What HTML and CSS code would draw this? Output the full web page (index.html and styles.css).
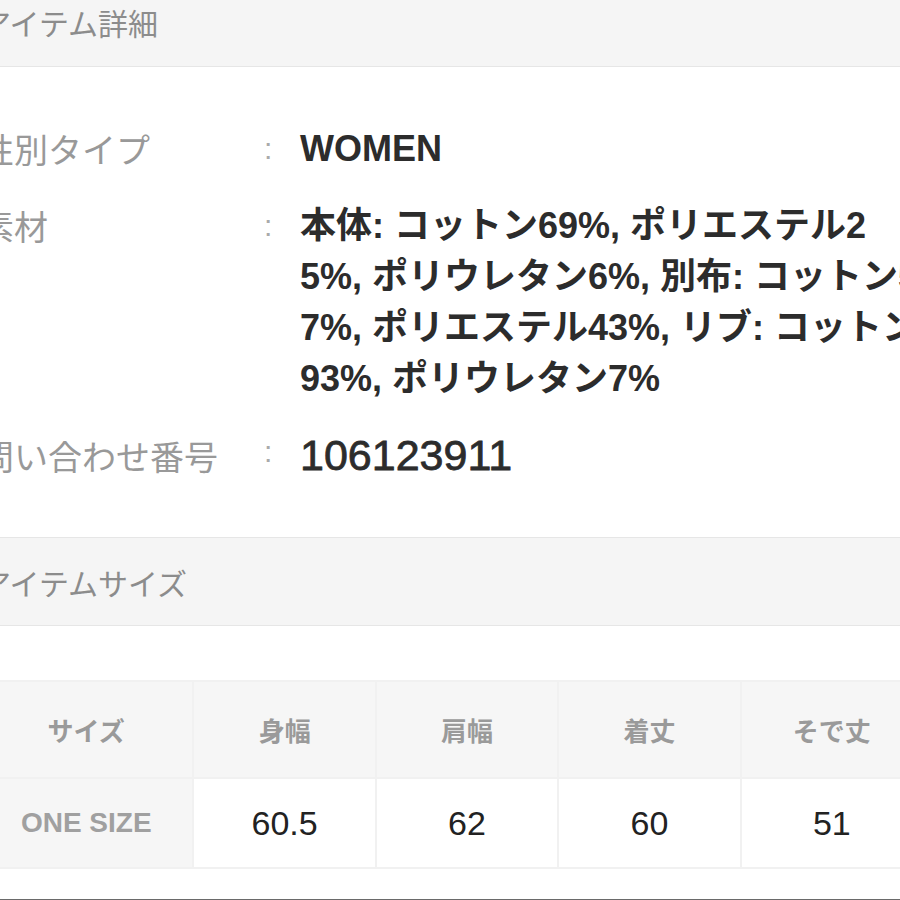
FILE: index.html
```html
<!DOCTYPE html>
<html lang="ja">
<head>
  <meta charset="UTF-8" />
  <meta name="viewport" content="width=device-width, initial-scale=1.0" />
  <title>アイテム詳細</title>
  <link rel="stylesheet" href="styles.css">
</head>
<body>

  <div class="page">
    <h2 class="section-head">アイテム詳細</h2>

    <dl class="spec-list">
      <div class="spec-row">
        <dt>性別タイプ</dt>
        <dd>WOMEN</dd>
      </div>
      <div class="spec-row">
        <dt>素材</dt>
        <dd>本体: コットン69%, ポリエステル25%, ポリウレタン6%, 別布: コットン57%, ポリエステル43%, リブ: コットン93%, ポリウレタン7%</dd>
      </div>
      <div class="spec-row">
        <dt>問い合わせ番号</dt>
        <dd class="code">106123911</dd>
      </div>
    </dl>

    <h2 class="section-head boxed">アイテムサイズ</h2>

    <table class="size-table">
      <thead>
        <tr>
          <th>サイズ</th>
          <th>身幅</th>
          <th>肩幅</th>
          <th>着丈</th>
          <th>そで丈</th>
        </tr>
      </thead>
      <tbody>
        <tr>
          <th>ONE SIZE</th>
          <td>60.5</td>
          <td>62</td>
          <td>60</td>
          <td>51</td>
        </tr>
      </tbody>
    </table>

    <div class="page-end"></div>
  </div>

</body>
</html>
```

FILE: styles.css
```css
* { margin: 0; padding: 0; box-sizing: border-box; }

body {
  font-family: "Noto Sans CJK JP", sans-serif;
  background: #fff;
  color: #222;
  overflow: hidden;
  width: 900px;
  height: 900px;
}

.page {
  width: 960px;
  margin-left: -22px;
  margin-top: -22px;
}

.section-head {
  height: 89px;
  display: flex;
  align-items: center;
  background: #f5f5f5;
  border-bottom: 1px solid #e6e6e6;
  font-size: 30px;
  font-weight: normal;
  color: #8c8c8c;
  padding-left: 3px;
}

.section-head.boxed {
  border-top: 1px solid #e6e6e6;
}

.spec-list {
  padding: 56px 0 56px;
  display: flex;
  flex-direction: column;
  gap: 26px;
}

.spec-row {
  display: flex;
  line-height: 51px;
}

.spec-row dt {
  width: 282px;
  padding-left: 2px;
  font-size: 34px;
  color: #999;
  flex-shrink: 0;
}

.spec-row dd {
  width: 662px;
  flex-shrink: 0;
  font-family: "Liberation Sans", "Noto Sans CJK JP", sans-serif;
  font-size: 36px;
  font-weight: bold;
  color: #2c2c2c;
  word-break: break-all;
  padding-left: 40px;
  position: relative;
}

.spec-row dd::before {
  content: ":";
  position: absolute;
  left: 4px;
  top: 0;
  font-weight: normal;
  font-size: 30px;
  color: #aaa;
  -webkit-text-stroke: 0;
}

.spec-row dd.code {
  font-size: 43px;
  font-weight: normal;
  -webkit-text-stroke: 0.8px #2c2c2c;
}

.spec-row dd.code::before {
  top: -4px;
}

.size-table {
  margin-top: 54px;
  border-collapse: separate;
  border-spacing: 2px;
  background: #f1f1f1;
  table-layout: fixed;
  width: 946px;
}

.size-table th,
.size-table td {
  width: 180px;
  text-align: center;
  vertical-align: middle;
}

.size-table thead th:first-child,
.size-table tbody th {
  width: 212px;
}

.size-table thead th {
  height: 95px;
  background: #f6f6f6;
  font-size: 26px;
  font-weight: bold;
  color: #9a9a9a;
}

.size-table tbody th {
  height: 88px;
  background: #f6f6f6;
  font-family: "Liberation Sans", "Noto Sans CJK JP", sans-serif;
  font-size: 28px;
  font-weight: bold;
  color: #a0a0a0;
}

.size-table td {
  height: 88px;
  background: #fff;
  font-family: "Liberation Sans", "Noto Sans CJK JP", sans-serif;
  font-size: 34px;
  color: #222;
}

.page-end {
  margin-top: 30px;
  border-top: 2px solid #6a6a6a;
}
```
